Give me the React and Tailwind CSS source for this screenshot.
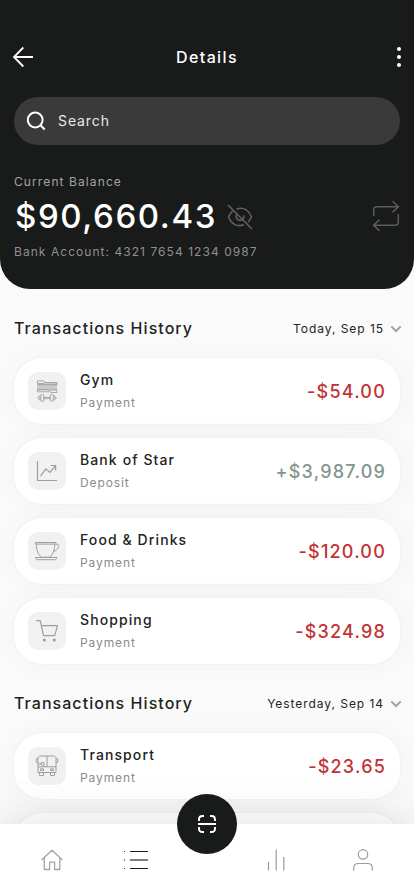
import React from 'react'

function GymIcon() {
  return (
    <svg width="24" height="24" viewBox="0 0 24 24" fill="none" stroke="#9d9e9d" strokeWidth="0.9" strokeLinejoin="round">
      <path d="M2 3.5h20v8H2z" fill="#c9cac9" stroke="none" />
      <path d="M9 3.5h13v2.2H2.5M2 10.7h12.5M14 12.8H2.5v-2" />
      <path d="M2.5 1.8h6L10 3.1 8.5 4.4h-6z" fill="#f1f1f1" />
      <path d="M22 11h-6l-1.7 1.2 1.7 1.3h6z" fill="#f1f1f1" />
      <rect x="5.8" y="15.5" width="3" height="6.8" rx="1" />
      <rect x="15.2" y="15.5" width="3" height="6.8" rx="1" />
      <path d="M5.8 17H4v3.8h1.8M18.2 17H20v3.8h-1.8M8.8 18.3h6.4v1.3H8.8zM2.3 18.9H4M20 18.9h1.7" />
    </svg>
  )
}

function ChartIcon() {
  return (
    <svg width="24" height="24" viewBox="0 0 24 24" fill="none" stroke="#9d9e9d" strokeWidth="1.2">
      <path d="M2.5 2v19.5H22" />
      <path d="M5.5 17.2l5.3-7.4 4 3.6L20.3 7M15.8 6.5h4.8v5" />
    </svg>
  )
}

function CupIcon() {
  return (
    <svg width="26" height="24" viewBox="0 0 26 24" fill="none" stroke="#9d9e9d" strokeWidth="1" strokeLinejoin="round">
      <path d="M1.5 3.5h20.3M1.5 3.5v1.6h20.3V3.5" />
      <path d="M2.3 5.2c.3 6.5 2 10.5 5 13h8.5c3-2.5 4.7-6.5 5-13" />
      <path d="M21.7 5.3c2-.6 3.2.2 2.9 2-.4 2.6-2.8 4.6-5.6 5.5" />
      <path d="M1.5 18.5H23c-.2 1.4-1 2.2-2.3 2.2H3.8c-1.3 0-2.1-.8-2.3-2.2z" />
    </svg>
  )
}

function CartIcon() {
  return (
    <svg width="24" height="24" viewBox="0 0 24 24" fill="none" stroke="#9d9e9d" strokeWidth="1.2" strokeLinejoin="round">
      <path d="M1.3 1.6h3.9l3.3 15h11.2l2.8-10H6.2" />
      <circle cx="9.3" cy="21" r="1.6" fill="#9d9e9d" stroke="none" />
      <circle cx="19.3" cy="21" r="1.6" fill="#9d9e9d" stroke="none" />
    </svg>
  )
}

function BusIcon() {
  return (
    <svg width="24" height="24" viewBox="0 0 24 24" fill="none" stroke="#9d9e9d" strokeWidth="1" strokeLinejoin="round">
      <path d="M5.5 2h13C20 2 21 3 21 4.5v14H3v-14C3 3 4 2 5.5 2z" />
      <path d="M3 12.8h18M12 2v10.8M3 10h3l2.5 2.8M6 10.5V8.7h3v3.5" />
      <path d="M3 4.5H2c-.5 0-.7.3-.7.7v2.6c0 .4.3.7.7.7h1M21 4.5h1c.5 0 .7.3.7.7v2.6c0 .4-.3.7-.7.7h-1" />
      <path d="M5.5 14.8h3v1.8h-3zM15.5 14.8h3v1.8h-3zM4.5 18.5v3h4v-3M15.5 18.5v3h4v-3" />
    </svg>
  )
}

function Chevron() {
  return (
    <svg className="ml-1.5 mt-px" width="12" height="8" viewBox="0 0 12 8" fill="none" stroke="#a3a4a3" strokeWidth="2">
      <path d="M1.3 1.5L6 6l4.7-4.5" />
    </svg>
  )
}

const sections = [
  {
    date: 'Today, Sep 15',
    items: [
      { name: 'Gym', type: 'Payment', amount: '-$54.00', icon: GymIcon },
      { name: 'Bank of Star', type: 'Deposit', amount: '+$3,987.09', icon: ChartIcon, income: true },
      { name: 'Food & Drinks', type: 'Payment', amount: '-$120.00', icon: CupIcon },
      { name: 'Shopping', type: 'Payment', amount: '-$324.98', icon: CartIcon },
    ],
  },
  {
    date: 'Yesterday, Sep 14',
    items: [{ name: 'Transport', type: 'Payment', amount: '-$23.65', icon: BusIcon }],
  },
]

function Transaction({ item }) {
  const Icon = item.icon
  return (
    <div className="h-[66px] shrink-0 flex items-center rounded-[28px] bg-white px-3.5 shadow-[0_0_2px_rgba(0,0,0,0.07),0_0_30px_rgba(0,0,0,0.035)]">
      <div className="size-[38px] rounded-[10px] bg-[#f1f1f1] flex items-center justify-center">
        <Icon />
      </div>
      <div className="ml-3.5 flex-1">
        <div className="mt-px text-sm leading-5 font-medium tracking-[1.1px] text-[#222322]">{item.name}</div>
        <div className="mt-[3px] text-xs leading-5 tracking-[0.9px] text-[#8b8c8b]">{item.type}</div>
      </div>
      <div
        className={
          item.income
            ? 'mt-0.5 text-lg font-medium tracking-[1.2px] text-[#82968c]'
            : 'mt-0.5 text-lg font-medium tracking-[1.2px] text-[#c33336]'
        }
      >
        {item.amount}
      </div>
    </div>
  )
}

function Header() {
  return (
    <header className="h-[289px] shrink-0 rounded-b-[30px] bg-[#191b1a] px-3.5 pt-[37px] text-white">
      <div className="h-10 flex items-center justify-between">
        <svg className="-ml-[2px]" width="22" height="22" viewBox="0 0 22 22" fill="none" stroke="currentColor" strokeWidth="1.8">
          <path d="M11.3 1.5L2 11l9.3 9.5M2 11h19" />
        </svg>
        <h1 className="mr-2 text-base font-medium tracking-[1.4px]">Details</h1>
        <svg className="-mr-[10px]" width="22" height="22" viewBox="0 0 22 22" fill="currentColor">
          <circle cx="11" cy="3" r="2" />
          <circle cx="11" cy="11" r="2" />
          <circle cx="11" cy="19" r="2" />
        </svg>
      </div>
      <div className="mt-5 h-12 flex items-center rounded-full bg-[#393a39] pl-3">
        <svg width="20" height="20" viewBox="0 0 20 20" fill="none" stroke="currentColor" strokeWidth="2">
          <circle cx="9.2" cy="9" r="7.4" />
          <path d="M14.5 14.3l4.2 4.2" />
        </svg>
        <span className="ml-3 text-sm tracking-[0.9px] text-[#e8e8e8]">Search</span>
      </div>
      <div className="mt-7 text-xs leading-[18px] tracking-[1.1px] text-[#a3a4a3]">Current Balance</div>
      <div className="mt-1 h-11 flex items-center">
        <div className="ml-px text-[33px] font-medium tracking-[1.6px]">$90,660.43</div>
        <svg className="ml-2.5" width="26" height="26" viewBox="0 0 26 26" fill="none" stroke="#5f605f" strokeWidth="1.6">
          <path d="M9.5 5.2C17 2.3 22 7 24.5 13c-.9 2-2.1 3.7-3.5 5M17 20.8C9.5 23.5 4 19.5 1.5 13c1-2.5 2.3-4.3 4.2-5.8" />
          <path d="M16.6 11.5c1 3.5-2.5 6-5.4 4.3-1.8-1.1-2.4-3.2-1.6-5M1 1l24 24" />
        </svg>
        <svg className="ml-auto mb-[5px]" width="28" height="32" viewBox="0 0 28 32" fill="none" stroke="#5b5c5b" strokeWidth="1.5">
          <path d="M1.7 17v-6.2c0-2 1-3 3-3h21.5M20.5 2.2l5.9 5.6-5.9 5.6" />
          <path d="M26.3 15v8.2c0 2-1 3-3 3H1.8M7.5 20.6l-5.9 5.6 5.9 5.6" />
        </svg>
      </div>
      <div className="mt-1 text-xs leading-[18px] tracking-[1.05px] text-[#8f908f]">Bank Account: 4321 7654 1234 0987</div>
    </header>
  )
}

function BottomNav() {
  return (
    <nav className="relative h-[72px] shrink-0 bg-white shadow-[0_0_50px_rgba(0,0,0,0.12)]">
      <div className="flex h-full items-center justify-between pl-10 pr-[39px]">
        <svg width="24" height="24" viewBox="0 0 24 24" fill="none" stroke="#a3a4a3" strokeWidth="1.3" strokeLinejoin="round" strokeLinecap="round">
          <path d="M2 11.5L12 2.3l10 9.2M4.3 9.5v12h5.3v-7.300h5v7.300h5.200v-12" />
        </svg>
        <svg className="ml-[34px]" width="26" height="24" viewBox="0 0 26 24" fill="none" stroke="#191b1a" strokeLinecap="round">
          <path d="M7.5 3.5h17M7.5 20.5h17M1.5 3.5h.01M1.5 20.5h.01" strokeWidth="1.2" />
          <path d="M7.5 12h17M1.5 12h.01" strokeWidth="1.6" stroke="#555655" />
        </svg>
        <svg className="ml-[89px]" width="24" height="24" viewBox="0 0 24 24" fill="none" stroke="#999a99" strokeWidth="1.2">
          <path d="M4.5 14v8.5M12.2 1.5v21M19.8 9v13.5" />
        </svg>
        <svg className="ml-[38px]" width="24" height="24" viewBox="0 0 24 24" fill="none" stroke="#999a99" strokeWidth="1.2">
          <circle cx="12" cy="6.4" r="4.7" />
          <path d="M2.7 22.5v-2.3c0-3 1.7-4.7 4.7-4.7h9.2c3 0 4.7 1.7 4.7 4.7v2.3" />
        </svg>
      </div>
      <button className="absolute -top-[30px] left-[177px] size-[60px] rounded-full bg-[#191b1a] flex items-center justify-center text-white">
        <svg width="20" height="20" viewBox="0 0 20 20" fill="none" stroke="currentColor" strokeWidth="1.9">
          <path d="M1 10h18M2 7V5.5C2 3.3 3.3 2 5.5 2H7M13 2h1.5C16.7 2 18 3.3 18 5.5V7M2 13v1.5C2 16.7 3.3 18 5.5 18H7M13 18h1.5c2.2 0 3.5-1.3 3.5-3.5V13" />
        </svg>
      </button>
    </nav>
  )
}

function App() {
  return (
    <div className="h-[896px] w-full flex flex-col overflow-hidden bg-[#fafafa] whitespace-nowrap font-['Inter',sans-serif]">
      <Header />
      <main className="flex-1 min-h-0 overflow-hidden px-3.5">
        {sections.map((section) => (
          <section key={section.date}>
            <div className="mt-[29px] mb-5 -mr-0.5 h-5 flex items-center">
              <h2 className="flex-1 text-base leading-5 font-medium tracking-[1.05px] text-[#222322]">Transactions History</h2>
              <span className="mt-px text-xs leading-5 tracking-[0.95px] text-[#222322]">{section.date}</span>
              <Chevron />
            </div>
            <div className="flex flex-col gap-3.5">
              {section.items.map((item) => (
                <Transaction key={item.name} item={item} />
              ))}
            </div>
          </section>
        ))}
        <div className="mt-3.5 h-[66px] rounded-[28px] bg-white shadow-[0_0_2px_rgba(0,0,0,0.07),0_0_30px_rgba(0,0,0,0.035)]" />
      </main>
      <BottomNav />
    </div>
  )
}

export default App
